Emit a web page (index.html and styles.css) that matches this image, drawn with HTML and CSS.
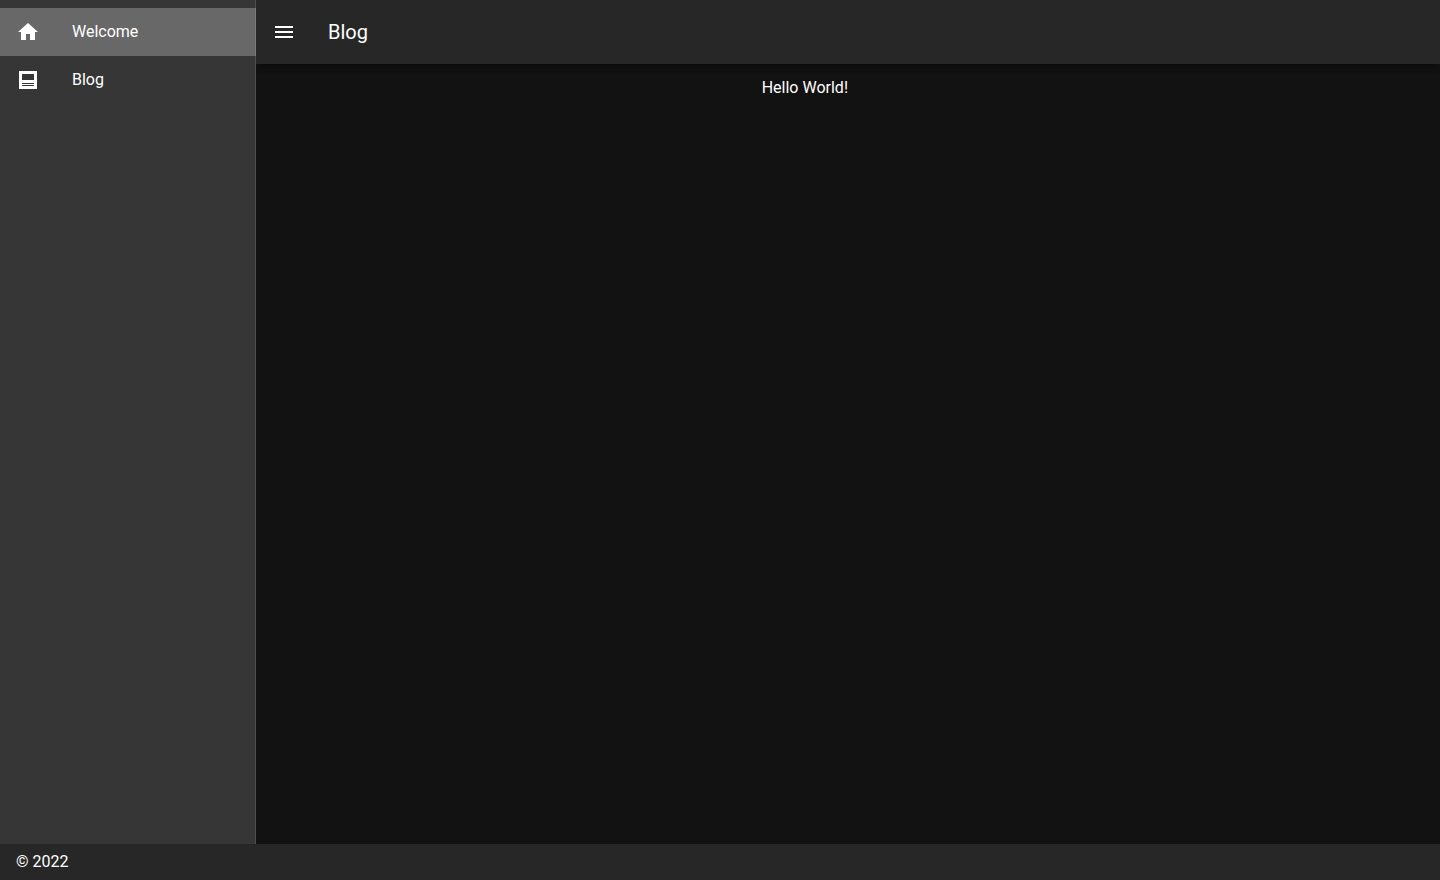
FILE: index.html
```html
<!DOCTYPE html>
<html lang="en">
<head>
  <meta charset="UTF-8" />
  <title>Blog</title>
  <link rel="stylesheet" href="styles.css">
</head>
<body>
  <div class="app">
    <nav class="drawer">
      <a class="nav-item active" href="#">
        <svg class="icon" viewBox="0 0 24 24"><path d="M10,20V14H14V20H19V12H22L12,3L2,12H5V20H10Z" /></svg>
        <span>Welcome</span>
      </a>
      <a class="nav-item" href="#">
        <svg class="icon" viewBox="0 0 24 24"><path d="M3,3V21H21V3M18,18H6V17H18M18,16H6V15H18M18,12H6V6H18Z" /></svg>
        <span>Blog</span>
      </a>
    </nav>

    <div class="page">
      <header class="app-bar">
        <button class="menu-btn" aria-label="Menu">
          <svg class="icon" viewBox="0 0 24 24"><path d="M3,6H21V8H3V6M3,11H21V13H3V11M3,16H21V18H3V16Z" /></svg>
        </button>
        <h1>Blog</h1>
      </header>
      <main>
        <p>Hello World!</p>
      </main>
    </div>
  </div>

  <footer>&copy; 2022</footer>
</body>
</html>
```
FILE: styles.css
```css
* {
  box-sizing: border-box;
}

body {
  margin: 0;
  height: 100vh;
  display: flex;
  flex-direction: column;
  overflow: hidden;
  font-family: Roboto, sans-serif;
  font-size: 16px;
  line-height: 24px;
  color: #fff;
  background: #121212;
}

.app {
  flex: 1;
  display: flex;
}

.drawer {
  position: relative;
  z-index: 1;
  width: 256px;
  padding-top: 8px;
  background: #363636;
}

/* divider drawn over the items */
.drawer::after {
  content: "";
  position: absolute;
  top: 0;
  right: 0;
  width: 1px;
  height: 100%;
  background: rgba(255, 255, 255, 0.12);
}

.nav-item {
  display: flex;
  align-items: center;
  gap: 32px;
  height: 48px;
  padding: 0 16px;
  color: #fff;
  text-decoration: none;
}

.nav-item.active {
  background: #686868;
}

.icon {
  display: block;
  width: 24px;
  height: 24px;
  fill: #fff;
}

.page {
  flex: 1;
}

.app-bar {
  display: flex;
  align-items: center;
  height: 64px;
  padding: 0 4px;
  background: #272727;
  box-shadow: 0 2px 4px -1px rgba(0, 0, 0, 0.2), 0 4px 5px rgba(0, 0, 0, 0.14), 0 1px 10px rgba(0, 0, 0, 0.12);
}

.menu-btn {
  padding: 12px;
  border: none;
  background: none;
  cursor: pointer;
}

h1 {
  margin: 0 0 0 20px;
  font-size: 20px;
  font-weight: 400;
}

main {
  display: grid;
  grid-template-columns: 1fr 1fr;
  padding: 12px 0;
}

p {
  margin: 0;
  justify-self: end;
}

footer {
  height: 36px;
  padding: 6px 16px;
  background: #272727;
}
```
